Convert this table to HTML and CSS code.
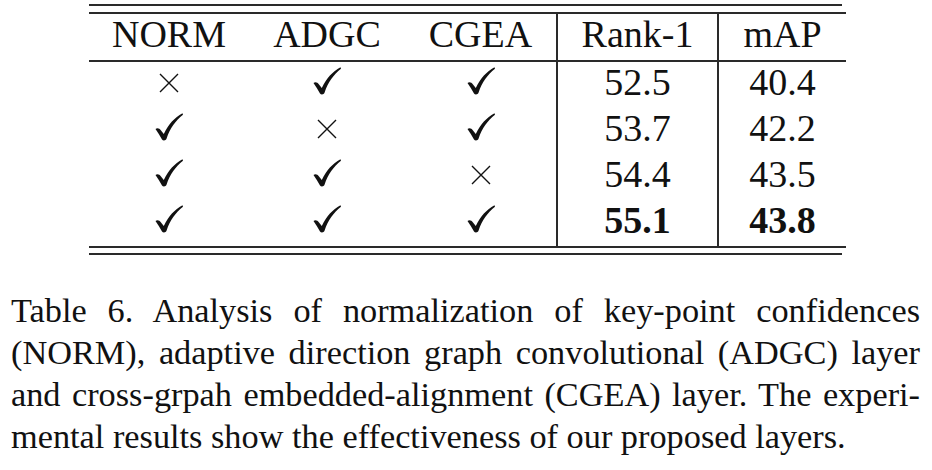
FILE: index.html
```html
<!DOCTYPE html>
<html>
<head>
<meta charset="utf-8">
<link rel="stylesheet" href="styles.css">
</head>
<body>
<div class="page">
  <div class="table-wrap">
    <table class="results">
      <thead>
        <tr>
          <th class="c1">NORM</th>
          <th class="c2">ADGC</th>
          <th class="c3">CGEA</th>
          <th class="c4 vl">Rank-1</th>
          <th class="c5 vl">mAP</th>
        </tr>
      </thead>
      <tbody>
        <tr>
          <td><svg class="cross" viewBox="0 0 20 20"><path d="M1 1 L19 19 M19 1 L1 19"/></svg></td>
          <td><svg class="check" viewBox="0 0 28 28"><path d="M0.5 16 C2.5 14.5 4.5 15.5 6 17.5 L8.8 21 C13.5 11.5 19.5 4.5 27.5 0.3 L28 1.8 C20.5 7.8 15 15 11.5 25.8 C10.8 27.8 8 28 7 26.5 C5 23 3 19.5 0.5 16 Z"/></svg></td>
          <td><svg class="check" viewBox="0 0 28 28"><path d="M0.5 16 C2.5 14.5 4.5 15.5 6 17.5 L8.8 21 C13.5 11.5 19.5 4.5 27.5 0.3 L28 1.8 C20.5 7.8 15 15 11.5 25.8 C10.8 27.8 8 28 7 26.5 C5 23 3 19.5 0.5 16 Z"/></svg></td>
          <td class="vl">52.5</td>
          <td class="vl">40.4</td>
        </tr>
        <tr>
          <td><svg class="check" viewBox="0 0 28 28"><path d="M0.5 16 C2.5 14.5 4.5 15.5 6 17.5 L8.8 21 C13.5 11.5 19.5 4.5 27.5 0.3 L28 1.8 C20.5 7.8 15 15 11.5 25.8 C10.8 27.8 8 28 7 26.5 C5 23 3 19.5 0.5 16 Z"/></svg></td>
          <td><svg class="cross" viewBox="0 0 20 20"><path d="M1 1 L19 19 M19 1 L1 19"/></svg></td>
          <td><svg class="check" viewBox="0 0 28 28"><path d="M0.5 16 C2.5 14.5 4.5 15.5 6 17.5 L8.8 21 C13.5 11.5 19.5 4.5 27.5 0.3 L28 1.8 C20.5 7.8 15 15 11.5 25.8 C10.8 27.8 8 28 7 26.5 C5 23 3 19.5 0.5 16 Z"/></svg></td>
          <td class="vl">53.7</td>
          <td class="vl">42.2</td>
        </tr>
        <tr>
          <td><svg class="check" viewBox="0 0 28 28"><path d="M0.5 16 C2.5 14.5 4.5 15.5 6 17.5 L8.8 21 C13.5 11.5 19.5 4.5 27.5 0.3 L28 1.8 C20.5 7.8 15 15 11.5 25.8 C10.8 27.8 8 28 7 26.5 C5 23 3 19.5 0.5 16 Z"/></svg></td>
          <td><svg class="check" viewBox="0 0 28 28"><path d="M0.5 16 C2.5 14.5 4.5 15.5 6 17.5 L8.8 21 C13.5 11.5 19.5 4.5 27.5 0.3 L28 1.8 C20.5 7.8 15 15 11.5 25.8 C10.8 27.8 8 28 7 26.5 C5 23 3 19.5 0.5 16 Z"/></svg></td>
          <td><svg class="cross" viewBox="0 0 20 20"><path d="M1 1 L19 19 M19 1 L1 19"/></svg></td>
          <td class="vl">54.4</td>
          <td class="vl">43.5</td>
        </tr>
        <tr>
          <td><svg class="check" viewBox="0 0 28 28"><path d="M0.5 16 C2.5 14.5 4.5 15.5 6 17.5 L8.8 21 C13.5 11.5 19.5 4.5 27.5 0.3 L28 1.8 C20.5 7.8 15 15 11.5 25.8 C10.8 27.8 8 28 7 26.5 C5 23 3 19.5 0.5 16 Z"/></svg></td>
          <td><svg class="check" viewBox="0 0 28 28"><path d="M0.5 16 C2.5 14.5 4.5 15.5 6 17.5 L8.8 21 C13.5 11.5 19.5 4.5 27.5 0.3 L28 1.8 C20.5 7.8 15 15 11.5 25.8 C10.8 27.8 8 28 7 26.5 C5 23 3 19.5 0.5 16 Z"/></svg></td>
          <td><svg class="check" viewBox="0 0 28 28"><path d="M0.5 16 C2.5 14.5 4.5 15.5 6 17.5 L8.8 21 C13.5 11.5 19.5 4.5 27.5 0.3 L28 1.8 C20.5 7.8 15 15 11.5 25.8 C10.8 27.8 8 28 7 26.5 C5 23 3 19.5 0.5 16 Z"/></svg></td>
          <td class="vl best">55.1</td>
          <td class="vl best">43.8</td>
        </tr>
      </tbody>
    </table>
  </div>
  <p class="caption">
    <span class="line">Table 6. Analysis of normalization of key-point confidences</span>
    <span class="line">(NORM), adaptive direction graph convolutional (ADGC) layer</span>
    <span class="line">and cross-grpah embedded-alignment (CGEA) layer. The experi-</span>
    <span class="line last">mental results show the effectiveness of our proposed layers.</span>
  </p>
</div>
</body>
</html>
```

FILE: styles.css
```css
html, body {
  margin: 0;
  padding: 0;
  background: #ffffff;
}

.page {
  width: 932px;
  height: 470px;
  overflow: hidden;
  font-family: "Liberation Serif", "Times New Roman", serif;
  color: #111111;
}

.table-wrap {
  margin: 4px 0 0 89px;
  width: 753px;
  border-top: 2px solid #2a2a2a;
  border-bottom: 2px solid #2a2a2a;
  padding: 6px 0 5px;
}

.results {
  width: 753px;
  border-collapse: collapse;
  table-layout: fixed;
  border-top: 2px solid #2a2a2a;
  border-bottom: 2px solid #2a2a2a;
  font-size: 38px;
}

.results th,
.results td {
  padding: 0 0 6px;
  height: 40px;
  line-height: 40px;
  text-align: center;
  font-weight: normal;
  vertical-align: top;
}

.results thead tr {
  border-bottom: 2px solid #2a2a2a;
}

.results .c1 { width: 160px; }
.results .c2 { width: 156px; }
.results .c3 { width: 151px; }
.results .c4 { width: 159px; }
.results .c5 { width: 127px; }

.results .vl {
  border-left: 2px solid #2a2a2a;
}

.results .best {
  font-weight: bold;
}

.check {
  width: 28px;
  height: 28px;
  display: inline-block;
  vertical-align: top;
  margin-top: 5px;
  fill: #111111;
}

.cross {
  width: 20px;
  height: 20px;
  display: inline-block;
  vertical-align: top;
  margin-top: 11px;
  fill: none;
  stroke: #111111;
  stroke-width: 1.4;
}

.caption {
  margin: 34px 0 0 11px;
  width: 909px;
  font-size: 34.3px;
  line-height: 42px;
}

.caption .line {
  display: block;
  white-space: nowrap;
  text-align: justify;
  text-align-last: justify;
}

.caption .line.last {
  text-align-last: left;
}
```
